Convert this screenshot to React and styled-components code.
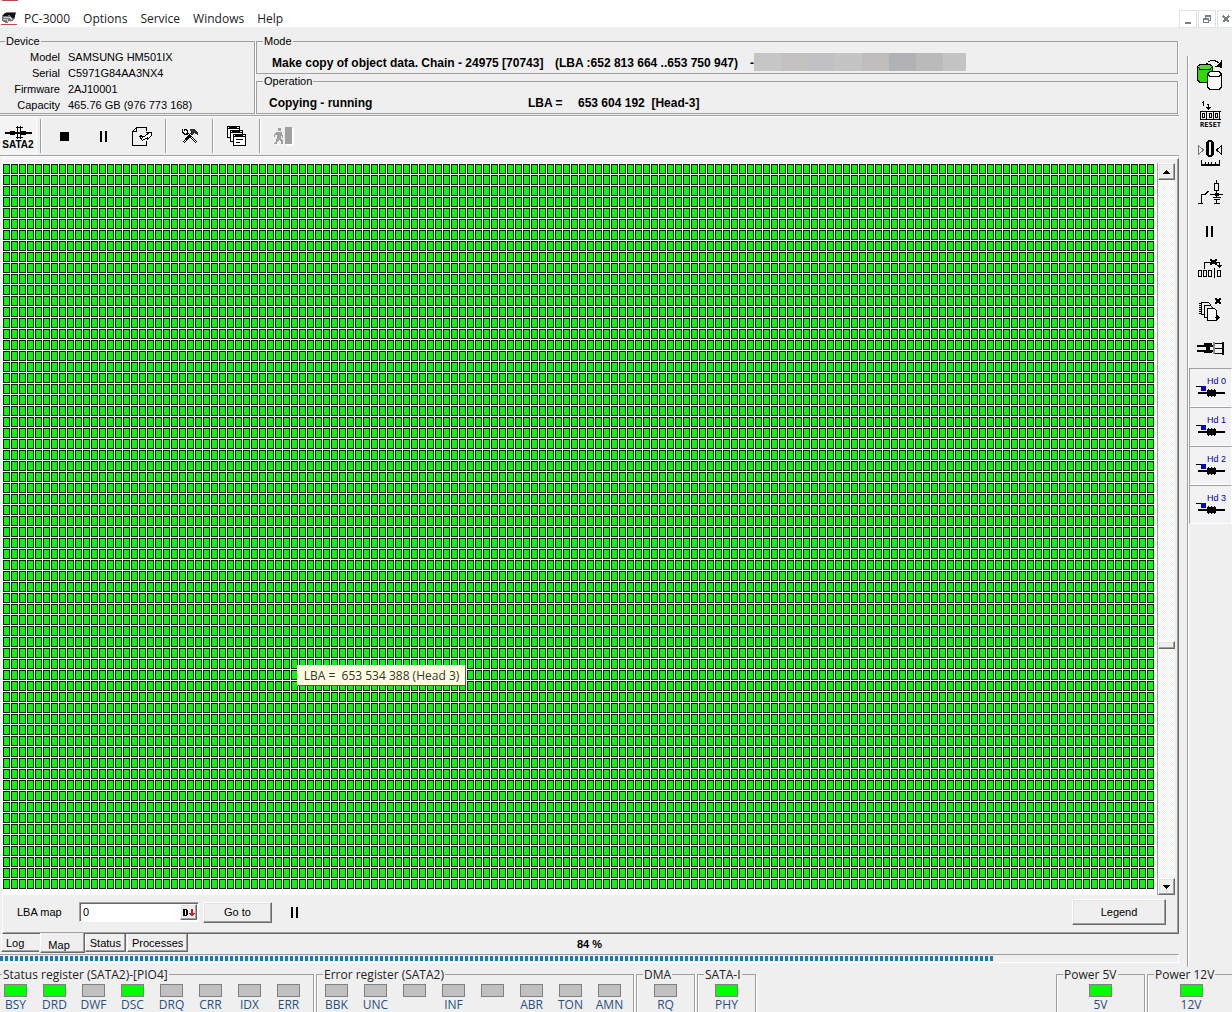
import React from 'react'
import styled, { createGlobalStyle, css } from 'styled-components'

const GlobalStyle = createGlobalStyle`
    * { box-sizing: border-box; }
    body {
        margin: 0;
        background: #efefef;
        color: #000;
        font: 11px/16px "Liberation Sans", Arial, sans-serif;
        overflow: hidden;
    }
    button, input {
        font: inherit;
        color: inherit;
        margin: 0;
        padding: 0;
        border: 0;
        background: none;
    }
    svg { display: block; flex: none; }
`

const raised = css`
    border: 1px solid;
    border-color: #fff #696969 #696969 #fff;
    box-shadow: inset -1px -1px 0 #a0a0a0, inset 1px 1px 0 #e3e3e3;
    background: #efefef;
`

const Window = styled.div`
    display: flex;
    flex-direction: column;
    height: 100vh;
    overflow: hidden;
`

const MenuBar = styled.header`
    display: flex;
    align-items: flex-end;
    height: 27px;
    padding-left: 1px;
    background: #fff linear-gradient(#b5484a, #b5484a) 2px 0 / 16px 1px no-repeat;
    flex: none;
`

const Menu = styled.nav`
    display: flex;
    flex: 1;
    gap: 13px;
    padding-left: 7px;
    button {
        font: 12px/16px "Open Sans", sans-serif;
        color: #222;
    }
`

const WindowButtons = styled.div`
    display: flex;
    gap: 1px;
    margin: 0 -3px -1px 0;
`

const WindowButton = styled.button`
    display: grid;
    place-items: center;
    width: 18px;
    height: 18px;
    background: #fff;
    border: 1px solid #e2e2e2;
`

const Body = styled.div`
    display: flex;
    flex: 1;
    min-height: 0;
`

const Main = styled.main`
    display: flex;
    flex-direction: column;
    flex: 1;
    min-width: 0;
`

const Header = styled.section`
    display: grid;
    grid-template-columns: 255px 1fr;
    gap: 1px;
    padding: 8px 1px 1px 0;
`

const HeaderColumn = styled.div`
    display: grid;
    grid-template-rows: 39px 39px;
    gap: 1px;
`

const Group = styled.fieldset`
    min-width: 0;
    margin: 0;
    padding: ${props => props.$pad || "8px 12px 0"};
    border: 1px solid #a0a0a0;
    border-left-width: ${props => props.$open ? 0 : "1px"};
    box-shadow: 1px 0 0 #fff;
    legend {
        margin-left: ${props => props.$open ? "5px" : "0"};
        padding: 0 1px;
        line-height: 12px;
        background: #efefef;
    }
`

const ModeGroup = styled(Group)`
    padding: 8px 12px 0 15px;
    legend { margin-left: -9px; }
    &.operation {
        padding-left: 12px;
        legend { margin-left: -6px; }
    }
`

const DeviceInfo = styled.dl`
    display: grid;
    grid-template-columns: 60px 1fr;
    column-gap: 8px;
    margin: 0;
    dt { text-align: right; }
    dd { margin: 0; }
`

const BoldLine = styled.div`
    display: flex;
    font-weight: 700;
    font-size: 12px;
    line-height: 16px;
    white-space: pre;
    .chain { width: 283px; }
    .range { width: 195px; }
    .status { width: 259px; }
    .lba { width: 50px; }
`

const Redacted = styled.span`
    width: 212px;
    height: 18px;
    margin-top: -2px;
    background: linear-gradient(to right,
        #c6c6c6 27px, #c3c2c0 27px 54px, #c1c1c4 54px 81px, #c4c4c4 81px 108px,
        #bfbebc 108px 135px, #b1b2b5 135px 162px, #bababa 162px 189px, #c3c3c3 189px);
`

const Toolbar = styled.div`
    display: flex;
    height: 41px;
    border: solid #a0a0a0;
    border-width: 1px 0;
    box-shadow: inset 0 1px 0 #fff, 0 1px 0 #fff;
    padding-top: 1px;
    flex: none;
`

const ToolButton = styled.button`
    display: grid;
    place-items: center;
    width: 39px;
    height: 38px;
`

const PortButton = styled.button`
    display: flex;
    flex-direction: column;
    align-items: center;
    width: 37px;
    height: 38px;
    padding-top: 9px;
    font-weight: 700;
    font-size: 10px;
    line-height: 12px;
    background: #f4f4f4;
    border-right: 1px solid #fff;
`

const Separator = styled.i`
    width: 2px;
    height: 34px;
    margin: 2px 3px;
    border-left: 1px solid #a0a0a0;
    border-right: 1px solid #fff;
`

const Panel = styled.section`
    display: flex;
    flex-direction: column;
    flex: 1;
    min-height: 0;
    margin: 2px 0 0 2px;
    border: 1px solid;
    border-color: #fff #696969 #696969 #fff;
    box-shadow: inset -1px -1px 0 #a0a0a0;
    padding: 4px 3px 1px 0;
`

const MapRow = styled.div`
    display: flex;
    flex: 1;
    min-height: 0;
`

const SectorMap = styled.div`
    position: relative;
    flex: 1;
    padding-top: 1px;
    background: #fff;
`

const Sectors = styled.div`
    width: round(down, 100%, 8px);
    height: round(down, 100%, 11px);
    background:
        linear-gradient(to right, transparent 7px, #fff 7px) 0 0 / 8px 11px,
        linear-gradient(to bottom, transparent 10px, #fff 10px) 0 0 / 8px 11px,
        linear-gradient(to right, #032403 1px, transparent 1px 6px, #032403 6px) 0 0 / 8px 11px,
        linear-gradient(to bottom, #032403 1px, transparent 1px 9px, #032403 9px) 0 0 / 8px 11px,
        #14f014;
`

const Hint = styled.div`
    position: absolute;
    left: 294px;
    top: 502px;
    min-width: 169px;
    padding: 1px 3px;
    font: 12px/17px "Open Sans", sans-serif;
    text-align: center;
    white-space: pre;
    color: #333;
    background: #ffffe1;
    border: 1px solid;
    border-color: #f4f4d8 #555 #555 #f4f4d8;
`

const ScrollBar = styled.div`
    display: flex;
    flex-direction: column;
    width: 18px;
    border-left: 1px solid #a0a0a0;
    background: repeating-conic-gradient(#fff 0 25%, #efefef 0 50%) 0 0 / 2px 2px;
`

const ScrollButton = styled.button`
    ${raised}
    display: grid;
    place-items: center;
    height: 17px;
`

const ScrollSpace = styled.div`
    flex: ${props => props.$grow};
`

const ScrollThumb = styled.div`
    ${raised}
    height: 8px;
`

const MapControls = styled.form`
    display: flex;
    align-items: center;
    height: 37px;
    padding: 0 9px 3px 14px;
    label { width: 62px; }
`

const LbaField = styled.div`
    display: flex;
    width: 120px;
    height: 20px;
    margin-right: 4px;
    padding: 1px;
    border: 1px solid;
    border-color: #a0a0a0 #fff #fff #a0a0a0;
    box-shadow: inset 1px 1px 0 #696969;
    background: #fff;
    input {
        flex: 1;
        min-width: 0;
        padding-left: 2px;
        outline: 0;
    }
    button {
        ${raised}
        width: 17px;
        display: grid;
        place-items: center;
    }
`

const PushButton = styled.button`
    ${raised}
    width: ${props => props.$wide ? "94px" : "69px"};
    height: ${props => props.$wide ? "26px" : "21px"};
`

const PauseButton = styled.button`
    margin-left: 19px;
    margin-right: auto;
`

const TabRow = styled.div`
    display: grid;
    grid-template-columns: 1fr auto 1fr;
    height: 20px;
    flex: none;
    output {
        align-self: center;
        font-weight: 700;
        line-height: 20px;
    }
`

const Tabs = styled.div`
    display: flex;
    align-items: flex-start;
    padding-left: 1px;
`

const Tab = styled.button`
    height: ${props => props.$active ? "20px" : "18px"};
    margin-top: ${props => props.$active ? "-1px" : "0"};
    padding: ${props => props.$active ? "4px 14px 0 7px" : "0 4px"};
    margin-right: ${props => props.$active ? "0" : "1px"};
    border: solid;
    border-width: 0 1px 1px;
    border-color: #fff #696969 #696969 #fff;
    box-shadow: inset -1px -1px 0 #a0a0a0;
    background: #efefef;
    &:first-child {
        padding-right: 15px;
        border-right: 0;
        box-shadow: inset 0 -1px 0 #a0a0a0;
    }
`

const Progress = styled.div`
    height: 9px;
    margin-bottom: 4px;
    padding: 1px 0;
    border: 1px solid;
    border-color: #a0a0a0 #fff #fff transparent;
    border-left: 0;
    flex: none;
    div {
        height: 5px;
        background: repeating-linear-gradient(to right, #2574b2 0 3px, #d5f3fc 3px 5px);
    }
`

const SideBar = styled.aside`
    display: flex;
    flex-direction: column;
    width: 45px;
    margin: 29px 0 0 8px;
    border-left: 1px solid #a0a0a0;
    box-shadow: inset 1px 0 0 #fff;
    padding-left: 1px;
    button { height: 39px; }
`

const HeadButton = styled.button`
    border: 1px solid;
    border-color: #a0a0a0 #fff #fff #a0a0a0;
    background: #f2f2f5;
    text { font-size: 9px; fill: #0000a0; }
    svg { margin: -1px; }
`

const Registers = styled.footer`
    display: flex;
    height: 45px;
    gap: 2px;
    flex: none;
    font: 12px/16px "Open Sans", sans-serif;
`

const Register = styled.fieldset`
    display: flex;
    justify-content: ${props => props.$single ? "center" : "flex-start"};
    flex: none;
    width: ${props => props.$width};
    height: 60px;
    min-width: 0;
    margin: 0 0 0 ${props => props.$shift || 0};
    padding: 2px 0 0;
    border: 1px solid #a0a0a0;
    box-shadow: 1px 0 0 #fff, inset 1px 0 0 #fff;
    legend {
        margin-left: 6px;
        padding: 1px 1px 0;
        line-height: 14px;
        color: #222;
        background: #efefef;
        white-space: nowrap;
    }
    &:last-child { margin-right: -3px; }
`

const Bit = styled.div`
    display: flex;
    flex-direction: column;
    align-items: center;
    width: 39px;
    color: #28507f;
    line-height: 15px;
    &::before {
        content: "";
        width: 21px;
        height: 11px;
        border: 1px solid #808080;
        background: ${props => props.$on ? "#00ff00" : "#c0c0c0"};
    }
`

const Icon = ({ w = 43, h = 39, children }) => (
    <svg width={w} height={h} viewBox={`0 0 ${w} ${h}`} fill="none" stroke="#000" shapeRendering="crispEdges" aria-hidden="true">
        {children}
    </svg>
)

const PauseIcon = () => (
    <Icon w={8} h={11}><path d="M0 0h2v11H0zM5 0h2v11H5z" fill="#000" stroke="none" /></Icon>
)

const AppIcon = () => (
    <Icon w={16} h={16}>
        <path d="M1 4L6 1H15L14 7L11 10L5 12L1 10Z" fill="#777" stroke="none" />
        <path d="M4 2H14V6L11 7L9 4L5 5L2 5Z" fill="#111" stroke="none" />
        <path d="M2 8h4v2h5M3 6h6l2 3" stroke="#ccc" />
        <path d="M0 13h16v1H0z" fill="#d0453a" stroke="none" />
    </Icon>
)

const SataIcon = () => (
    <Icon w={27} h={13}>
        <path d="M0 6h27v2H0zM5 5h5v4H5zM16 5h5v4h-5z" fill="#000" stroke="none" />
        <path d="M12.5 0v13M15.5 0v13M11 1.5h7M11 11.5h7" />
    </Icon>
)

const StopIcon = () => (
    <Icon w={9} h={9}><path d="M0 0h9v9H0z" fill="#000" stroke="none" /></Icon>
)

const CopyIcon = () => (
    <Icon w={21} h={19}>
        <path d="M14.5 4V.5H4.5L.5 4.5V18.5H14.5V14M4.5 .5V4.5H.5" />
        <path d="M7.5 9.5l3 4 5-3v2l4-4V5.5h-5l2 1-6 4-1-2z" fill="#fff" />
    </Icon>
)

const ToolsIcon = () => (
    <Icon w={16} h={16}>
        <path d="M4 5L14 15M5 4L15 14" />
        <path d="M11 5L2 15M10 4L1 14" />
        <path d="M.5 1v3l2 2h3V3l-2-2M2 .5v2" />
        <path d="M8 1h4l4 4v2l-2-1-2-1-2 2-1-1 1-2-2-1z" fill="#333" stroke="none" />
    </Icon>
)

const CascadeIcon = () => (
    <Icon w={20} h={20}>
        {[0, 4, 8].map((offset, i) => (
            <g key={offset} transform={`translate(${i * 3} ${offset})`}>
                <path d="M.5 .5h12v11H.5z" fill="#fff" />
                <path d="M0 0h13v3H0z" fill="#000" stroke="none" />
                <path d="M1 1.5h1M10 1.5h2" stroke="#fff" />
            </g>
        ))}
        <path d="M9 13.5h7M9 16.5h4" />
    </Icon>
)

const ExitIcon = () => (
    <Icon w={20} h={19}>
        <path d="M12 1h8v18h-8z" fill="#fff" stroke="none" />
        <path d="M11 0h7v17h-7zM4 1h3v3H4zM3 5h4l1 1v2h1v3H8V9H7v3l2 2v3H7v-2l-2-2-2 2v2H0v-1l2-2 1-3V8H1v2H0V8l1-2z" fill="#a0a0a0" stroke="none" />
        <path d="M1 17.5h9" stroke="#fff" strokeDasharray="1 1" />
    </Icon>
)

const DisksIcon = () => (
    <Icon>
        <path d="M8.5 10.5V24L11 26.5H20L23.5 24V10.5z" fill="#32d60b" />
        <path d="M8.5 10.5L11 8.5H21L23.5 10.5 21 13.5H11z" fill="#5bd33b" />
        <path d="M18.5 18V31L21 33.5H30L32.5 31V18z" fill="#fff" />
        <path d="M18.5 18L21 15.5H30L32.5 18 30 20.5H21z" fill="#fff" />
        <path d="M17 7.5h2M19 5.5h2M21 4.5h6M26 5.5h3M28 6.5h2" />
        <path d="M33 4v8h-2v-1h-5v-1h2V9h1V8h1V7h1V6h1V4z" fill="#000" stroke="none" />
    </Icon>
)

const ResetIcon = () => (
    <Icon>
        <path d="M13 7.5h2M14.5 6v5M18 9.5h1.5v5M17 12.5h5M18 13.5h3" />
        <path d="M32 16.5H11.5v8H32M17.5 16v8M24.5 16v8M30.5 16v8" />
        <path d="M13.5 18.5h2v4h-2zM20.5 18.5h2v4h-2zM26.5 18.5h2v4h-2z" />
        <text x="11" y="32" fontSize="7" fontWeight="700" fontFamily="DejaVu Sans Mono, monospace" fill="#000" stroke="none">RESET</text>
    </Icon>
)

const ZeroIcon = () => (
    <Icon>
        <path d="M9.5 11.5v9l5-4.5z" stroke="#777" />
        <path d="M32.5 11.5v9l-5-4.5z" />
        <path d="M19 6h4v1h1v1h1v13h-1v1h-1v1h-4v-1h-1v-1h-1V8h1V7h1zM20 8v13h2V8z" fill="#000" fillRule="evenodd" stroke="none" />
        <path d="M12.5 26v5M16.5 28v3M19.5 28v3M22.5 28v3M26.5 28v3M30.5 26v5" />
        <path d="M12 30h19v2H12z" fill="#000" stroke="none" />
    </Icon>
)

const SwitchIcon = () => (
    <Icon>
        <path d="M9 30.5h5M12.5 30v-9h4l3-3M21 21.5h13M27.5 7v4M27.5 18v6M25.5 10.5h4v7h-4zM24 24.5h8M25 26.5h6M27.5 26v4M25 30.5h6" />
        <path d="M26 20h4v3h-4z" fill="#000" stroke="none" />
    </Icon>
)

const SidePauseIcon = () => (
    <Icon><path d="M17 14h2v11h-2zM22 14h2v11h-2z" fill="#000" stroke="none" /></Icon>
)

const SkipIcon = () => (
    <Icon>
        <path d="M9.5 19.5h3v6h-3zM14.5 19.5h3v6h-3zM19.5 19.5h3v6h-3zM28.5 19.5h3v6h-3zM25.5 17v10" />
        <path d="M15.5 18v-6.5h15V17M28 14.5h5M29 15.5h3" />
        <path d="M21 8h2v1h3V8h2v2h-1v2h1v2h-2v-1h-3v1h-2v-2h1v-2h-1z" fill="#000" stroke="none" />
    </Icon>
)

const ChipIcon = () => (
    <Icon>
        <path d="M10 13.5h2M10 15.5h2M10 17.5h2M10 19.5h2M10 21.5h2M10 23.5h2" />
        <path d="M12.5 12.5h7l2 2v10h-9z" fill="#efefef" />
        <path d="M15.5 15.5h6l2 2v10h-8z" fill="#efefef" />
        <path d="M18.5 18.5h7l2 2v10h-9z" fill="#fff" />
        <path d="M26 8h2v1h2V8h2v2h-1v2h1v2h-2v-1h-2v1h-2v-2h1v-2h-1zM26 27h5v1h-5zM28 25h1v5h-1zM27 26h3v3h-3z" fill="#000" stroke="none" />
    </Icon>
)

const ConnectorIcon = () => (
    <Icon>
        <path d="M8 16h17v2H8zM8 21h17v2H8zM15 14h8v3h-8zM17 17h4v5h-4zM15 22h8v2h-8z" fill="#000" stroke="none" />
        <path d="M24 13h2v12h-2z" fill="#888" stroke="none" />
        <path d="M26 14.5h8M26 19.5h8M26 24.5h8" />
        <path d="M33 13h2v13h-2z" fill="#000" stroke="none" />
    </Icon>
)

const HeadIcon = ({ index }) => (
    <Icon>
        <text x="18" y="16" stroke="none">Hd {index}</text>
        <path d="M7 18.5h6" />
        <path d="M12 18h5v5h-5z" fill="#0000d0" stroke="none" />
        <path d="M9 24h27v2H9zM18 22h9v6h-9z" fill="#000" stroke="none" />
        <path d="M19.5 21v8M22.5 21v8M25.5 21v8" />
    </Icon>
)

const device = [
    ["Model", "SAMSUNG HM501IX"],
    ["Serial", "C5971G84AA3NX4"],
    ["Firmware", "2AJ10001"],
    ["Capacity", "465.76 GB (976 773 168)"],
]

const sideTools = [
    ["Copy disk", DisksIcon],
    ["Reset", ResetIcon],
    ["Recalibrate", ZeroIcon],
    ["Power", SwitchIcon],
    ["Pause", SidePauseIcon],
    ["Skip", SkipIcon],
    ["Chip", ChipIcon],
    ["Connector", ConnectorIcon],
]

const statusBits = ["BSY", "DRD", "DWF", "DSC", "DRQ", "CRR", "IDX", "ERR"]
const activeBits = ["BSY", "DRD", "DSC"]
const errorBits = ["BBK", "UNC", "", "INF", "", "ABR", "TON", "AMN"]
const done = 994 / 1179

const App = () => (
    <Window>
        <GlobalStyle />
        <MenuBar>
            <AppIcon />
            <Menu>
                {["PC-3000", "Options", "Service", "Windows", "Help"].map(name => (
                    <button key={name}>{name}</button>
                ))}
            </Menu>
            <WindowButtons>
                <WindowButton aria-label="Minimize">
                    <Icon w={9} h={9}><path d="M1 7h6v2H1z" fill="#777f88" stroke="none" /></Icon>
                </WindowButton>
                <WindowButton aria-label="Restore">
                    <Icon w={9} h={9}><path d="M.5 4.5h5v3h-5zM0 3.5h6M2.5 3V1.5h5v4H6M2 .5h6" stroke="#777f88" /></Icon>
                </WindowButton>
                <WindowButton aria-label="Close">
                    <Icon w={9} h={9}><path d="M1 1l6 6M7 1L1 7" stroke="#777f88" strokeWidth="2" /></Icon>
                </WindowButton>
            </WindowButtons>
        </MenuBar>

        <Body>
            <Main>
                <Header>
                    <Group $open $pad="2px 0 0">
                        <legend>Device</legend>
                        <DeviceInfo>
                            {device.map(([term, value]) => (
                                <React.Fragment key={term}>
                                    <dt>{term}</dt>
                                    <dd>{value}</dd>
                                </React.Fragment>
                            ))}
                        </DeviceInfo>
                    </Group>
                    <HeaderColumn>
                        <ModeGroup>
                            <legend>Mode</legend>
                            <BoldLine>
                                <span className="chain">Make copy of object data. Chain - 24975 [70743]</span>
                                <span className="range">(LBA :652 813 664 ..653 750 947)</span>
                                <span>-</span>
                                <Redacted />
                            </BoldLine>
                        </ModeGroup>
                        <ModeGroup className="operation">
                            <legend>Operation</legend>
                            <BoldLine>
                                <span className="status">Copying - running</span>
                                <span className="lba">LBA =</span>
                                <span>653 604 192  [Head-3]</span>
                            </BoldLine>
                        </ModeGroup>
                    </HeaderColumn>
                </Header>

                <Toolbar>
                    <PortButton><SataIcon /><span>SATA2</span></PortButton>
                    <Separator />
                    <ToolButton aria-label="Stop"><StopIcon /></ToolButton>
                    <ToolButton aria-label="Pause"><PauseIcon /></ToolButton>
                    <ToolButton aria-label="Copy"><CopyIcon /></ToolButton>
                    <Separator />
                    <ToolButton aria-label="Settings"><ToolsIcon /></ToolButton>
                    <Separator />
                    <ToolButton aria-label="Windows"><CascadeIcon /></ToolButton>
                    <Separator />
                    <ToolButton aria-label="Exit" disabled><ExitIcon /></ToolButton>
                </Toolbar>

                <Panel>
                    <MapRow>
                        <SectorMap>
                            <Sectors />
                            <Hint>LBA =  653 534 388 (Head 3)</Hint>
                        </SectorMap>
                        <ScrollBar>
                            <ScrollButton aria-label="Scroll up">
                                <Icon w={8} h={4}><path d="M0 4h7V3H6V2H5V1H4V0H3v1H2v1H1v1H0z" fill="#000" stroke="none" /></Icon>
                            </ScrollButton>
                            <ScrollSpace $grow={462} />
                            <ScrollThumb />
                            <ScrollSpace $grow={229} />
                            <ScrollButton aria-label="Scroll down">
                                <Icon w={8} h={4}><path d="M0 0h7v1H6v1H5v1H4v1H3V3H2V2H1V1H0z" fill="#000" stroke="none" /></Icon>
                            </ScrollButton>
                        </ScrollBar>
                    </MapRow>
                    <MapControls onSubmit={e => e.preventDefault()}>
                        <label htmlFor="lba">LBA map</label>
                        <LbaField>
                            <input id="lba" defaultValue="0" />
                            <button type="button" aria-label="Decimal">
                                <Icon w={12} h={9}>
                                    <path d="M0 1h4v1h1v5H4v1H0zM2 2v5h1V2z" fill="#000" fillRule="evenodd" stroke="none" />
                                    <path d="M8 1h2v4h2v1h-1v1h-1v1H8V7H7V6H6V5h2z" fill="#cf1b1b" stroke="none" />
                                </Icon>
                            </button>
                        </LbaField>
                        <PushButton>Go to</PushButton>
                        <PauseButton type="button" aria-label="Pause map"><PauseIcon /></PauseButton>
                        <PushButton type="button" $wide>Legend</PushButton>
                    </MapControls>
                </Panel>

                <TabRow>
                    <Tabs role="tablist">
                        <Tab role="tab">Log</Tab>
                        <Tab role="tab" $active aria-selected="true">Map</Tab>
                        <Tab role="tab">Status</Tab>
                        <Tab role="tab">Processes</Tab>
                    </Tabs>
                    <output>84 %</output>
                </TabRow>
                <Progress role="progressbar" aria-valuenow={84}>
                    <div style={{ width: `${done * 100}%` }} />
                </Progress>
            </Main>

            <SideBar>
                {sideTools.map(([name, Drawing]) => (
                    <button key={name} aria-label={name}><Drawing /></button>
                ))}
                {[0, 1, 2, 3].map(index => (
                    <HeadButton key={index}><HeadIcon index={index} /></HeadButton>
                ))}
            </SideBar>
        </Body>

        <Registers>
            <Register $width="319px" $shift="-5px">
                <legend>Status register (SATA2)-[PIO4]</legend>
                {statusBits.map(bit => <Bit key={bit} $on={activeBits.includes(bit)}>{bit}</Bit>)}
            </Register>
            <Register $width="318px">
                <legend>Error register (SATA2)</legend>
                {errorBits.map((bit, i) => <Bit key={i}>{bit}</Bit>)}
            </Register>
            <Register $single $width="59px">
                <legend>DMA</legend>
                <Bit>RQ</Bit>
            </Register>
            <Register $single $width="59px">
                <legend>SATA-I</legend>
                <Bit $on>PHY</Bit>
            </Register>
            <Register $single $width="89px" $shift="auto">
                <legend>Power 5V</legend>
                <Bit $on>5V</Bit>
            </Register>
            <Register $single $width="88px">
                <legend>Power 12V</legend>
                <Bit $on>12V</Bit>
            </Register>
        </Registers>
    </Window>
)

export default App
